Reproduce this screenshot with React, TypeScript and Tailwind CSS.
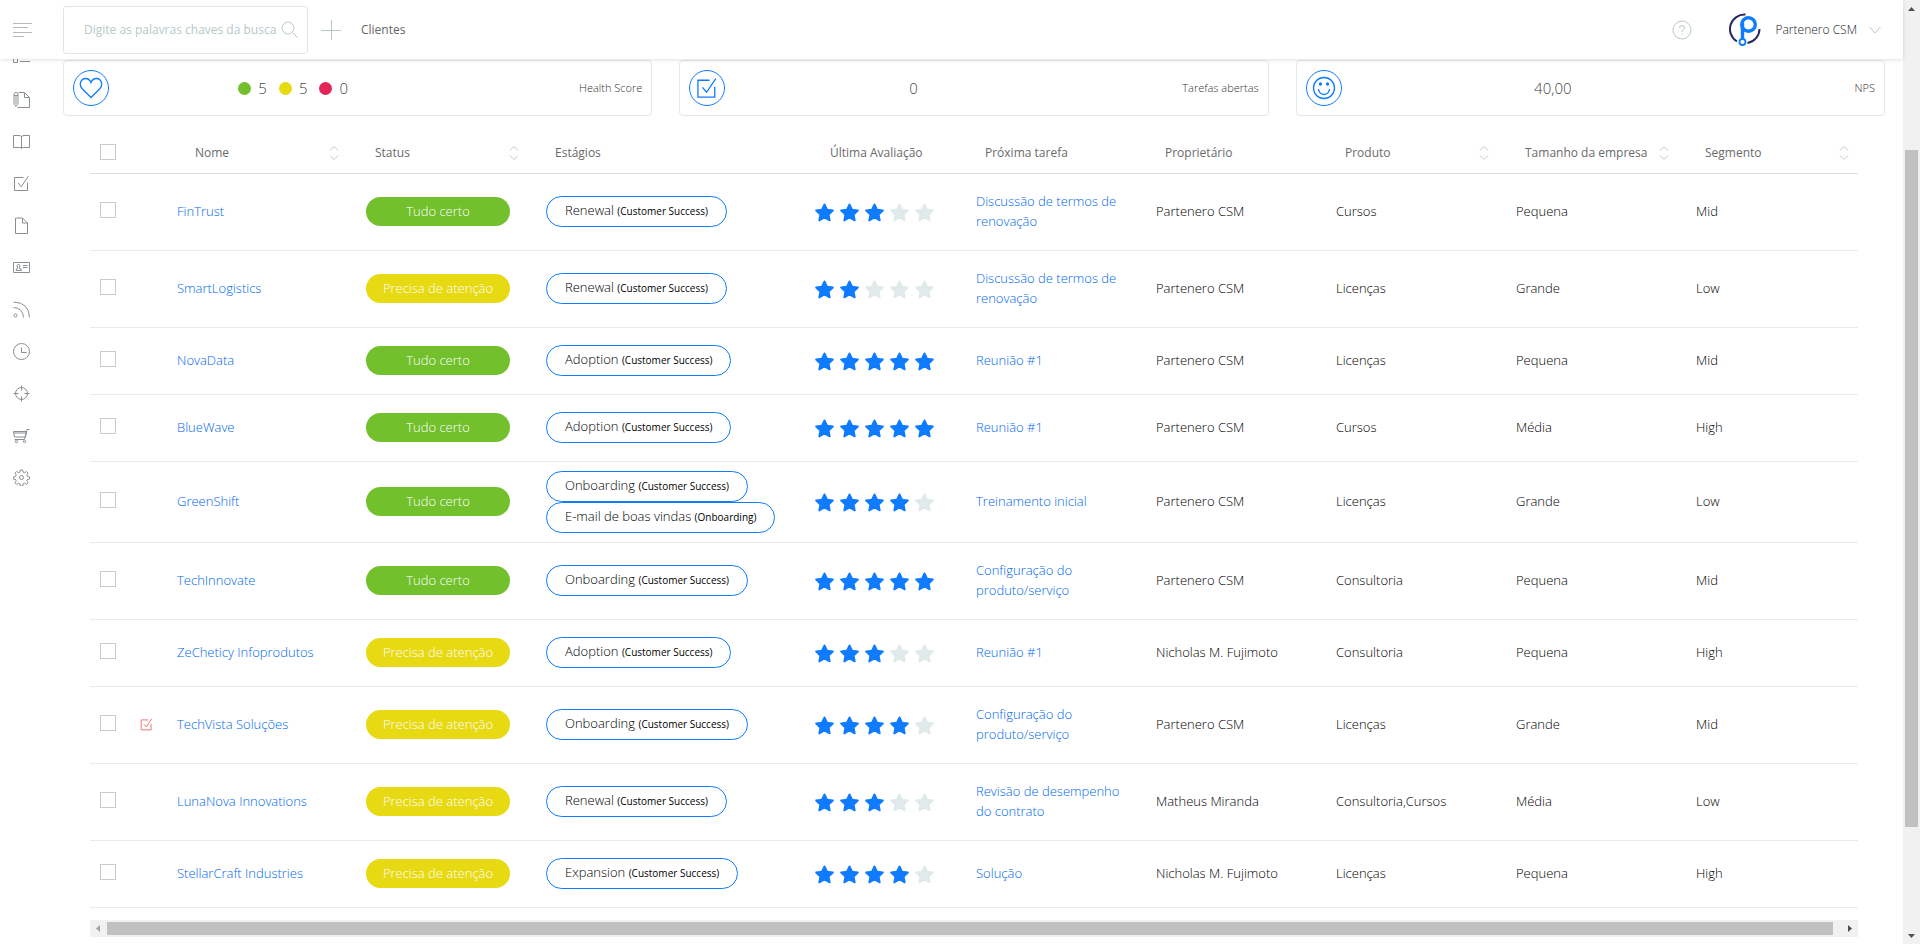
import { ReactNode } from 'react'

type Health = 'ok' | 'attention'

interface Stage {
  name: string
  journey: string
}

interface Client {
  name: string
  health: Health
  stages: Stage[]
  rating: number
  nextTask: string
  owner: string
  product: string
  size: string
  segment: string
  lateTask?: boolean
  height: string
}

const CS = 'Customer Success'

const clients: Client[] = [
  { name: 'FinTrust', health: 'ok', stages: [{ name: 'Renewal', journey: CS }], rating: 3, nextTask: 'Discussão de termos de renovação', owner: 'Partenero CSM', product: 'Cursos', size: 'Pequena', segment: 'Mid', height: 'h-[77px]' },
  { name: 'SmartLogistics', health: 'attention', stages: [{ name: 'Renewal', journey: CS }], rating: 2, nextTask: 'Discussão de termos de renovação', owner: 'Partenero CSM', product: 'Licenças', size: 'Grande', segment: 'Low', height: 'h-[77px]' },
  { name: 'NovaData', health: 'ok', stages: [{ name: 'Adoption', journey: CS }], rating: 5, nextTask: 'Reunião #1', owner: 'Partenero CSM', product: 'Licenças', size: 'Pequena', segment: 'Mid', height: 'h-[67px]' },
  { name: 'BlueWave', health: 'ok', stages: [{ name: 'Adoption', journey: CS }], rating: 5, nextTask: 'Reunião #1', owner: 'Partenero CSM', product: 'Cursos', size: 'Média', segment: 'High', height: 'h-[67px]' },
  { name: 'GreenShift', health: 'ok', stages: [{ name: 'Onboarding', journey: CS }, { name: 'E-mail de boas vindas', journey: 'Onboarding' }], rating: 4, nextTask: 'Treinamento inicial', owner: 'Partenero CSM', product: 'Licenças', size: 'Grande', segment: 'Low', height: 'h-[81px]' },
  { name: 'TechInnovate', health: 'ok', stages: [{ name: 'Onboarding', journey: CS }], rating: 5, nextTask: 'Configuração do produto/serviço', owner: 'Partenero CSM', product: 'Consultoria', size: 'Pequena', segment: 'Mid', height: 'h-[77px]' },
  { name: 'ZeCheticy Infoprodutos', health: 'attention', stages: [{ name: 'Adoption', journey: CS }], rating: 3, nextTask: 'Reunião #1', owner: 'Nicholas M. Fujimoto', product: 'Consultoria', size: 'Pequena', segment: 'High', height: 'h-[67px]' },
  { name: 'TechVista Soluções', health: 'attention', stages: [{ name: 'Onboarding', journey: CS }], rating: 4, nextTask: 'Configuração do produto/serviço', owner: 'Partenero CSM', product: 'Licenças', size: 'Grande', segment: 'Mid', lateTask: true, height: 'h-[77px]' },
  { name: 'LunaNova Innovations', health: 'attention', stages: [{ name: 'Renewal', journey: CS }], rating: 3, nextTask: 'Revisão de desempenho do contrato', owner: 'Matheus Miranda', product: 'Consultoria,Cursos', size: 'Média', segment: 'Low', height: 'h-[77px]' },
  { name: 'StellarCraft Industries', health: 'attention', stages: [{ name: 'Expansion', journey: CS }], rating: 4, nextTask: 'Solução', owner: 'Nicholas M. Fujimoto', product: 'Licenças', size: 'Pequena', segment: 'High', height: 'h-[67px]' },
]

const Icon = ({ children, className = 'h-[17px] w-[17px]' }: { children: ReactNode; className?: string }) => (
  <svg viewBox="0 0 17 17" fill="none" stroke="currentColor" strokeWidth="1" className={className} aria-hidden="true">
    {children}
  </svg>
)

const CheckSquare = ({ className }: { className?: string }) => (
  <Icon className={className}>
    <path d="M10.5 2.5h-9v13h13V7.5M5 8l3.2 3.8L15.3 1.2" />
  </Icon>
)

const navItems: { label: string; icon: ReactNode }[] = [
  { label: 'Lista', icon: <Icon><path d="M.5 2.500h4v4h-4zM.5 9.500h4v4h-4zM7 5.500h10M7 12.500h10" /></Icon> },
  {
    label: 'Contratos',
    icon: (
      <Icon>
        <path d="M5.500 1.500h6l5 5v10h-12M11.500 1.500v5h5M1 3.500q0-2 2-2t2 2v9l-2 3-2-3zM1 4.500h4M3 5v8" />
      </Icon>
    ),
  },
  { label: 'Biblioteca', icon: <Icon><path d="M.5 2.500h5.500q2.500 0 2.500 1.500 0-1.500 2.500-1.500h5.500v12h-6q-2 0-2 1 0-1-2-1h-6zM8.500 4v11" /></Icon> },
  { label: 'Tarefas', icon: <CheckSquare /> },
  { label: 'Documentos', icon: <Icon><path d="M2.500 1h7l5 5v10.500h-12zM9.500 1v5h5" /></Icon> },
  {
    label: 'Contatos',
    icon: (
      <Icon>
        <path d="M.5 3.500h16v10H.5zM3 11.500q0-2 2-2.500-1-1-1-2 0-1.500 1.500-1.500T7 7q0 1-1 2 2.500.5 2.500 2.500zM10 6.500h4.500M10 8.500h4.500" />
      </Icon>
    ),
  },
  { label: 'Feed', icon: <Icon><circle cx="2.500" cy="14.500" r="1.500" /><path d="M.5 6.500q9.500.5 10 10M.5 1q15.500.5 16 15.500" /></Icon> },
  { label: 'Histórico', icon: <Icon><circle cx="8.500" cy="8.500" r="8" /><path d="M8.500 4.500v5h5" /></Icon> },
  { label: 'Metas', icon: <Icon><circle cx="8.500" cy="8.500" r="6" /><path d="M8.500.5v5M8.500 11.500v5M.5 8.500h5M11.500 8.500h5" /></Icon> },
  {
    label: 'Vendas',
    icon: (
      <Icon>
        <path d="M16.500 2.500h-2.500l-2.500 10h-10M.5 4.500h13l-1 5.500h-11zM.5 6h13" />
        <circle cx="3.500" cy="14.500" r="1.200" />
        <circle cx="11.500" cy="14.500" r="1.200" />
      </Icon>
    ),
  },
  {
    label: 'Configurações',
    icon: (
      <Icon>
        <circle cx="8.500" cy="8.500" r="2" />
        <path d="M7.300 1h2.400l.4 2.200 1.400.6 1.900-1.300 1.700 1.700-1.300 1.900.6 1.400 2.200.4v2.200l-2.200.4-.6 1.400 1.300 1.900-1.700 1.700-1.900-1.300-1.400.6-.4 2.200H7.300l-.4-2.200-1.400-.6-1.900 1.300-1.700-1.700 1.300-1.900-.6-1.400L.4 10.100V7.900l2.200-.4.600-1.400-1.300-1.900 1.700-1.700 1.900 1.300 1.400-.6z" />
      </Icon>
    ),
  },
]

const Logo = () => (
  <svg viewBox="0 0 32 34" fill="none" className="h-[34px] w-8" aria-label="Partenero">
    <path d="M16.500 1.600A14.500 14.500 0 0 0 8 28.500M30.500 16A14.500 14.500 0 0 1 18.500 30" stroke="#262c5e" strokeWidth="2" />
    <circle cx="19.500" cy="11.500" r="6.800" stroke="#0f7bff" strokeWidth="3.400" />
    <path d="M13.500 10v16" stroke="#0f7bff" strokeWidth="3.400" />
    <circle cx="13.500" cy="29" r="3" fill="#fff" stroke="#0f7bff" strokeWidth="1.800" />
  </svg>
)

const Stars = ({ rating }: { rating: number }) => (
  <div className="flex justify-center gap-[6px]" role="img" aria-label={`${rating} de 5`}>
    {[1, 2, 3, 4, 5].map((n) => (
      <svg key={n} viewBox="0 0 20 20" className={n <= rating ? 'h-[19px] w-[19px] text-[#0f7bff]' : 'h-[19px] w-[19px] text-[#e0eaea]'}>
        <path
          d="M10 1.500l2.700 5.600 6.100.8-4.500 4.200 1.200 6.200L10 15.200l-5.500 3.100 1.200-6.200L1.200 7.900l6.100-.8z"
          fill="currentColor"
          stroke="currentColor"
          strokeWidth="2"
          strokeLinejoin="round"
        />
      </svg>
    ))}
  </div>
)

const SortButton = ({ label }: { label: string }) => (
  <button type="button" aria-label={`Ordenar por ${label}`} className="text-[#bfc9c9]">
    <svg viewBox="0 0 10 14" fill="none" stroke="currentColor" className="h-[14px] w-[10px]">
      <path d="M1 4.500l4-4 4 4M1 9.500l4 4 4-4" />
    </svg>
  </button>
)

const Check = ({ label }: { label: string }) => (
  <input
    type="checkbox"
    aria-label={label}
    className="block h-4 w-4 appearance-none border border-[#cacaca] bg-white checked:bg-[#0f7bff]"
  />
)

const columns = [
  { label: 'Nome', sortable: true, cell: 'pl-[27px]' },
  { label: 'Status', sortable: true, cell: 'pl-[18px]' },
  { label: 'Estágios', sortable: false, cell: 'pl-[18px]' },
  { label: 'Última Avaliação', sortable: false, cell: 'pl-[43px]' },
  { label: 'Próxima tarefa', sortable: false, cell: 'pl-[18px]' },
  { label: 'Proprietário', sortable: false, cell: 'pl-[18px]' },
  { label: 'Produto', sortable: true, cell: 'pl-[18px]' },
  { label: 'Tamanho da empresa', sortable: true, cell: 'pl-[18px]' },
  { label: 'Segmento', sortable: true, cell: 'pl-[18px]' },
]

interface StatCardProps {
  icon: ReactNode
  label: string
  labelWidth: string
  children: ReactNode
}

const StatCard = ({ icon, label, labelWidth, children }: StatCardProps) => (
  <section className="flex h-14 flex-1 items-center rounded-sm border border-[#e0e9e9] px-[9px]">
    <span className="flex h-9 w-9 items-center justify-center rounded-full border border-[#0f7bff] text-[#0f7bff]">{icon}</span>
    <div className="flex flex-1 items-center justify-center text-[15px] text-[#444]">{children}</div>
    <div className={`text-right text-[11px] text-[#333] ${labelWidth}`}>{label}</div>
  </section>
)

const HealthCount = ({ dot, value }: { dot: string; value: number }) => (
  <span className="flex items-center gap-[7px]">
    <span className={`h-[13px] w-[13px] rounded-full ${dot}`} />
    {value}
  </span>
)

const Header = () => (
  <header className="relative z-10 flex h-[59px] items-center bg-white pr-[22px] shadow-[0_1px_4px_rgba(0,0,0,0.12)]">
    <button type="button" aria-label="Menu" className="ml-[13px] text-[#b5b9bc]">
      <svg viewBox="0 0 20 16" stroke="currentColor" className="h-4 w-5">
        <path d="M0 1.500h19M0 5.500h15M0 10.500h19M0 14.500h11" />
      </svg>
    </button>
    <div className="ml-[30px] flex h-12 w-[245px] items-center rounded-[3px] border border-[#dfe8e8] pr-[9px] pl-5">
      <input
        type="text"
        aria-label="Busca"
        placeholder="Digite as palavras chaves da busca"
        className="min-w-0 flex-1 text-[12px] font-normal outline-none placeholder:text-[#b5c9c9]"
      />
      <button type="button" aria-label="Buscar" className="text-[#b5c9c9]">
        <Icon><circle cx="7" cy="7" r="6" /><path d="M11.500 11.500l5 5" /></Icon>
      </button>
    </div>
    <button type="button" aria-label="Adicionar" className="ml-[13px] text-[#b5c9c9]">
      <svg viewBox="0 0 20 20" stroke="currentColor" className="h-5 w-5">
        <path d="M10.500 0v20M0 10.500h20" />
      </svg>
    </button>
    <h1 className="ml-[20px] text-[12px] font-normal text-[#666]">Clientes</h1>

    <div className="ml-auto flex items-center">
      <button type="button" aria-label="Ajuda" className="text-[#b5c9c9]">
        <svg viewBox="0 0 20 20" fill="none" stroke="currentColor" className="h-5 w-5">
          <circle cx="10" cy="10" r="9" />
          <path d="M7.500 8q0-2.500 2.500-2.500T12.500 8q0 1.200-1.300 2T10 12M10 13.500v1.500" />
        </svg>
      </button>
      <button type="button" className="ml-[37px] flex items-center text-[12px] text-[#222]">
        <Logo />
        <span className="ml-[14px]">Partenero CSM</span>
        <svg viewBox="0 0 12 8" fill="none" stroke="#b5c9c9" className="ml-3 h-2 w-3">
          <path d="M.5 1l5.500 6 5.500-6" />
        </svg>
      </button>
    </div>
  </header>
)

const Sidebar = () => (
  <nav className="flex w-[63px] shrink-0 flex-col items-start gap-[25px] pl-[13px] text-[#8a8f94]">
    {navItems.map((item, i) => (
      <a key={item.label} href="#" aria-label={item.label} className={i === 0 ? '-mt-[10px]' : ''}>
        {item.icon}
      </a>
    ))}
  </nav>
)

const ClientRow = ({ client }: { client: Client }) => (
  <tr className={`border-b border-[#ebebeb] ${client.height}`}>
    <td className="pb-1 pl-[10px]">
      <Check label={client.name} />
    </td>
    <td>{client.lateTask && <CheckSquare className="ml-2 h-[13px] w-[13px] text-[#e2504f]" />}</td>
    <td className="pl-[9px]">
      <a href="#" className="text-[#0068ee]">{client.name}</a>
    </td>
    <td className="pl-[9px]">
      <span
        className={`flex h-[29px] w-36 items-center justify-center rounded-full text-white ${
          client.health === 'ok' ? 'bg-[#72c02c]' : 'bg-[#e7d912]'
        }`}
      >
        {client.health === 'ok' ? 'Tudo certo' : 'Precisa de atenção'}
      </span>
    </td>
    <td className="pl-[9px]">
      <div className="flex flex-col items-start">
        {client.stages.map((stage) => (
          <span
            key={stage.name}
            className="h-[31px] rounded-full border border-[#0f7bff] px-[18px] leading-[27px] whitespace-nowrap text-black"
          >
            {stage.name} <small className="text-[10px] font-normal">({stage.journey})</small>
          </span>
        ))}
      </div>
    </td>
    <td className="pt-0.5 pr-[6px]">
      <Stars rating={client.rating} />
    </td>
    <td className="pr-5 pb-0.5 pl-[9px]">
      <a href="#" className="block leading-5 text-[#0068ee]">{client.nextTask}</a>
    </td>
    <td className="pl-[9px]">{client.owner}</td>
    <td className="pl-[9px]">{client.product}</td>
    <td className="pl-[9px]">{client.size}</td>
    <td className="pl-[9px]">{client.segment}</td>
  </tr>
)

export default function App() {
  return (
    <div className="flex h-screen overflow-hidden bg-white font-['Open_Sans','Noto_Sans',sans-serif] font-light">
      <div className="min-w-0 flex-1">
        <Header />
        <div className="flex">
          <Sidebar />
          <main className="min-w-0 flex-1 pt-px pr-[18px]">
            <div className="flex gap-[27px]">
              <StatCard
                label="Health Score"
                labelWidth="w-[165px]"
                icon={
                  <svg viewBox="0 0 24 22" fill="none" stroke="currentColor" strokeWidth="1.300" className="h-[22px] w-6">
                    <path d="M12 20.500L3 11.500C-.5 7.500 2 1.500 6.500 1.500c2.500 0 4.500 1.500 5.500 4 1-2.500 3-4 5.500-4 4.500 0 7 6 3.500 10z" />
                  </svg>
                }
              >
                <div className="flex gap-3">
                  <HealthCount dot="bg-[#72c02c]" value={5} />
                  <HealthCount dot="bg-[#e7d912]" value={5} />
                  <HealthCount dot="bg-[#e32456]" value={0} />
                </div>
              </StatCard>
              <StatCard label="Tarefas abertas" labelWidth="w-[157px]" icon={<CheckSquare className="h-[22px] w-[22px]" />}>
                0
              </StatCard>
              <StatCard
                label="NPS"
                labelWidth="w-[111px]"
                icon={
                  <svg viewBox="0 0 24 24" fill="none" stroke="currentColor" strokeWidth="1.300" className="h-6 w-6">
                    <circle cx="12" cy="12" r="10.500" />
                    <path d="M6.500 13a5.500 5.500 0 0 0 11 0" />
                    <circle cx="8.500" cy="8" r="1" fill="currentColor" />
                    <circle cx="15.500" cy="8" r="1" fill="currentColor" />
                  </svg>
                }
              >
                40,00
              </StatCard>
            </div>

            <div className="mr-[27px] ml-[27px]">
              <div className="overflow-hidden">
                <table className="w-full min-w-[1777px] table-fixed border-collapse text-left text-[13px] text-black">
                  <colgroup>
                    <col className="w-[42px]" />
                    <col className="w-[36px]" />
                    <col className="w-[189px]" />
                    <col className="w-[180px]" />
                    <col className="w-[250px]" />
                    <col className="w-[180px]" />
                    <col className="w-[180px]" />
                    <col className="w-[180px]" />
                    <col className="w-[180px]" />
                    <col className="w-[180px]" />
                    <col className="w-[180px]" />
                  </colgroup>
                  <thead>
                    <tr className="h-[57px] border-b border-[#dcdfdf] text-[12px] text-[#6a6a6a]">
                      <th className="pt-[15px] pl-[10px]">
                        <Check label="Selecionar todos" />
                      </th>
                      <th />
                      {columns.map((column) => (
                        <th key={column.label} scope="col" className={`pt-[18px] pr-[18px] font-normal whitespace-nowrap ${column.cell}`}>
                          <div className="flex items-center justify-between">
                            {column.label}
                            {column.sortable && <SortButton label={column.label} />}
                          </div>
                        </th>
                      ))}
                    </tr>
                  </thead>
                  <tbody>
                    {clients.map((client) => (
                      <ClientRow key={client.name} client={client} />
                    ))}
                  </tbody>
                </table>
              </div>

              <div className="mt-3 flex h-[17px] items-center bg-[#f1f1f1]">
                <svg viewBox="0 0 17 17" className="h-[17px] w-[17px] fill-[#a3a3a3]"><path d="M10 5v7L6 8.500z" /></svg>
                <div className="mr-2 h-[13px] flex-1 bg-[#c1c1c1]" />
                <svg viewBox="0 0 17 17" className="h-[17px] w-[17px] fill-[#505050]"><path d="M7 5v7l4-3.500z" /></svg>
              </div>
            </div>
          </main>
        </div>
      </div>

      <div className="flex w-[17px] flex-col items-center bg-[#f1f1f1]">
        <svg viewBox="0 0 17 17" className="h-[17px] w-[17px] fill-[#505050]"><path d="M5 11h7L8.500 7z" /></svg>
        <div className="flex w-[13px] flex-1 flex-col">
          <div className="flex-[133]" />
          <div className="flex-[677] bg-[#c1c1c1]" />
          <div className="flex-[100]" />
        </div>
        <svg viewBox="0 0 17 17" className="h-[17px] w-[17px] fill-[#505050]"><path d="M5 7h7l-3.500 4z" /></svg>
      </div>
    </div>
  )
}
